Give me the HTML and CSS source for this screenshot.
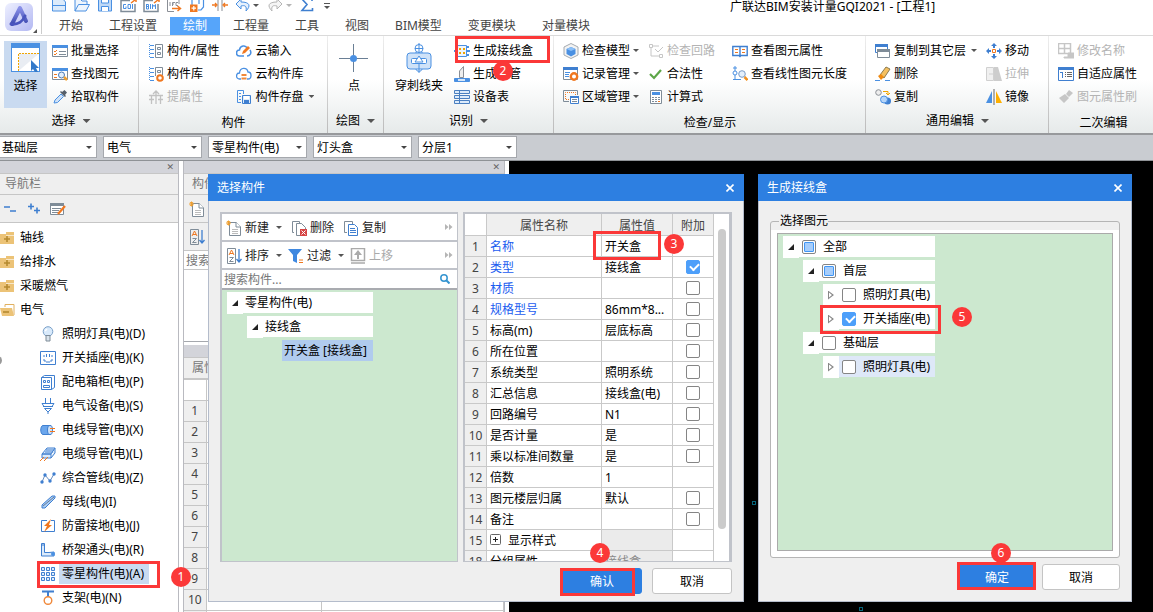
FILE: index.html
```html
<!DOCTYPE html>
<html lang="zh-CN">
<head>
<meta charset="utf-8">
<title>广联达BIM安装计量GQI2021</title>
<link rel="stylesheet" href="styles.css">
</head>
<body>
<div class="app">
  <header class="top">
    <div class="logo">
      <svg width="28" height="28" viewBox="0 0 28 28"><defs><linearGradient id="lg" x1="0" y1="0" x2="1" y2="1"><stop offset="0" stop-color="#eef0ff"/><stop offset="1" stop-color="#b3b8f2"/></linearGradient><linearGradient id="la" x1="0" y1="0" x2="0" y2="1"><stop offset="0" stop-color="#8a90e8"/><stop offset="1" stop-color="#3f4bb0"/></linearGradient></defs><rect width="28" height="28" rx="6" fill="url(#lg)"/><path d="M7 21 15 5l6 13" fill="none" stroke="url(#la)" stroke-width="4" stroke-linejoin="round" stroke-linecap="round"/><path d="M6 21c7 1 12-3 14-8" fill="none" stroke="#4a55be" stroke-width="3" stroke-linecap="round"/></svg>
      <svg class="corner" width="4" height="4" viewBox="0 0 4 4"><path d="M4 0v4H0z" fill="#555"/></svg>
    </div>
    <div class="top-main">
      <div class="title-row">
        <div class="quick">
          <button aria-label="新建工程"><svg width="16" height="13" viewBox="0 0 16 13" fill="#dcebfb" stroke="#4a90e2"><path d="M1.500-2v13h13V2L11-2zM1.500 5.500h13"/></svg></button>
          <button aria-label="打开"><svg width="16" height="13" viewBox="0 0 16 13" fill="#eef5fd" stroke="#4a90e2"><path d="M1 11V-1h5l2 2h5v3M1 11 4.500 4.500H15.500L12 11z"/></svg></button>
          <button aria-label="保存"><svg width="16" height="13" viewBox="0 0 16 13" fill="#bfd9f7" stroke="#4a90e2"><path d="M1.500-2h13v13h-13z"/><path d="M4.500-2h7v5h-7zM4.500 11V6.500h7V11" fill="#fff"/></svg></button>
          <button aria-label="导出GQI"><svg width="17" height="13" viewBox="0 0 17 13" fill="none"><path d="M1 0v11.500h14V4M1 0.500h9" stroke="#7f8c98" stroke-width="1.500"/><path d="M6 4.500H3.500v4H6v-2M8 4.500h2.500v4H8zM12.500 4v5" stroke="#4a90e2"/><path d="M11 3l4-3M12-1h4v3" stroke="#f07820" stroke-width="1.500"/></svg></button>
          <button aria-label="导出BIM"><svg width="17" height="13" viewBox="0 0 17 13" fill="none"><path d="M1 0v11.500h14V4M1 0.500h9" stroke="#7f8c98" stroke-width="1.500"/><path d="M3.500 4v5h2V4.500h-2M3.500 6.500h2M7.500 4v5M9.500 9V4.500l1.500 2 1.500-2V9" stroke="#4a90e2"/><path d="M11 3l4-3M12-1h4v3" stroke="#f07820" stroke-width="1.500"/></svg></button>
          <button aria-label="导入IFC"><svg width="16" height="13" viewBox="0 0 16 13" fill="none"><path d="M13 4V-1H1.500v12.500H8" stroke="#8a8f96"/><path d="M4 2v4M6.500 6V2.500H9M6.500 4H8M12 2.500h-2v3h2" stroke="#8a8f96"/><path d="M6 8.500h8M11.500 6l3 2.500-3 2.500" stroke="#f07820" stroke-width="1.500"/></svg></button>
          <button aria-label="复制图元"><svg width="16" height="13" viewBox="0 0 16 13" fill="none"><path d="M3 5V-1h7v5M7-1h7.500v8L12 10H9" stroke="#4a90e2" stroke-width="1.200"/><path d="M1 4.500h7.500V12H1z" fill="#f07820"/><path d="M4.800 6v4.500M2.500 8.200H7" stroke="#fff" stroke-width="1.200"/></svg></button>
          <button aria-label="拆分"><svg width="16" height="13" viewBox="0 0 16 13" fill="none"><path d="M6-1v12M10-1v12" stroke="#8a8f96"/><path d="M0 5h4M3 3l2 2-2 2M16 5h-4M13 3l-2 2 2 2" stroke="#f07820" stroke-width="1.300"/></svg></button>
          <button aria-label="撤销"><svg width="25" height="13" viewBox="0 0 25 13" fill="#e6f1fd"><path d="M6-1 1 4l5 5V6c4-1 6 0 5 5 5-5 4-9-5-9z" stroke="#4a90e2"/><path d="M18 4h6l-3 3z" fill="#555"/></svg></button>
          <button aria-label="重做"><svg width="26" height="13" viewBox="0 0 26 13" fill="#f5f5f5"><path d="M10-1l5 5-5 5V6C6 5 4 6 5 11 0 6 1 2 10 2z" stroke="#b5b5b5"/><path d="M19 4h6l-3 3z" fill="#b5b5b5"/></svg></button>
          <button aria-label="汇总计算"><svg width="14" height="13" viewBox="0 0 14 13"><path d="M12 1V-1H2l5 5.500L2 10.500h10.500V8" fill="none" stroke="#3f7fd0" stroke-width="1.600"/></svg></button>
          <button aria-label="更多"><svg width="8" height="13" viewBox="0 0 8 13"><path d="M1 3.500h6" stroke="#555"/><path d="M1 6h6L4 9z" fill="#555"/></svg></button>
        </div>
        <div class="app-title">广联达BIM安装计量GQI2021 - [工程1]</div>
      </div>
      <nav class="tabs">
        <button>开始</button><button>工程设置</button><button class="active">绘制</button><button>工程量</button><button>工具</button><button>视图</button><button>BIM模型</button><button>变更模块</button><button>对量模块</button>
      </nav>
    </div>
  </header>

  <div class="ribbon">
    <section class="group g1">
      <div class="tools">
        <button class="big selected"><svg width="30" height="30" viewBox="0 0 30 30"><rect x=".5" y=".5" width="28" height="28" fill="#fff" stroke="#4a90e2"/><path d="M0 0h29v5H0z" fill="#4a90e2"/><path d="M28 10.500H7.500V28" fill="#e9edf3" stroke="#f0a500" stroke-dasharray="2 1"/><path d="m20 17 8 8h-3l2 4h-3l-2-3-2 2z" fill="#3379c9"/></svg>选择</button>
        <div class="col">
          <button><svg class="ic" viewBox="0 0 16 16" fill="none"><path d="M.5 2.500h15v11H.5z" stroke="#7f8c98"/><path d="M0 2h16v3H0z" fill="#4a90e2"/><path d="m2 8 1 1 2-2M2 11l1 1 2-2" stroke="#f07820"/><path d="M7 8.500h7M7 11.500h7" stroke="#7f8c98"/></svg>批量选择</button>
          <button><svg class="ic" viewBox="0 0 16 16" fill="none"><path d="M.5 2.500h15v11H.5z" stroke="#7f8c98"/><path d="M0 2h16v3H0z" fill="#4a90e2"/><path d="M2 8.500h3M2 11.500h3" stroke="#f07820"/><circle cx="9.500" cy="9" r="3" fill="#e3effc" stroke="#4a7ab5"/><path d="m12 11 3 3" stroke="#f0a030" stroke-width="2.500"/></svg>查找图元</button>
          <button><svg class="ic" viewBox="0 0 16 16"><path d="m2 14 1-3 6-6 2.500 2.500-6 6z" fill="#cfe2f8" stroke="#4a90e2"/><path d="m8 3 5 5 1-1-1-1 2-2.500L12.500 1 10 3 9 2z" fill="#555f6b"/></svg>拾取构件</button>
        </div>
      </div>
      <div class="caption">选择<i class="dd"></i></div>
    </section>
    <section class="group g2">
      <div class="tools">
        <div class="col">
          <button><svg class="ic" viewBox="0 0 16 16" fill="none"><path d="M1.500 1v14" stroke="#4a90e2" stroke-dasharray="1 1"/><path d="M2 2.500h4M2 6.500h4M2 10.500h4M2 14.500h4" stroke="#4a90e2"/><path d="M7.500 1.500h7v13h-7z" stroke="#7f8c98"/><path d="M9.500 4.500h3v2h-3zM9.500 9.500h3v2h-3z" stroke="#7f8c98"/></svg>构件/属性</button>
          <button><svg class="ic" viewBox="0 0 16 16" fill="none"><path d="M1.500 1v14" stroke="#4a90e2" stroke-dasharray="1 1"/><path d="M2 2.500h4M2 6.500h4M2 10.500h4M2 14.500h4" stroke="#4a90e2"/><path d="M7.500 10V1.500h7V9M9.500 4.500h3v2h-3z" stroke="#7f8c98"/><circle cx="12" cy="12" r="2.800" stroke="#f07820" stroke-width="2"/></svg>构件库</button>
          <button class="off"><svg class="ic" viewBox="0 0 16 16" fill="none" stroke="#c2c2c2"><path d="M1 6.500h14M3.500 6.500V15M12.500 6.500V15M8 15V2M5 5l3-3 3 3M1 10.500h5M10 10.500h5" stroke-width="1.300"/></svg>提属性</button>
        </div>
        <div class="col spaced">
          <button><svg class="ic" viewBox="0 0 16 16" fill="none"><path d="M8 13H3.500a3 3 0 0 1 0-6C4 2 10 2 11 5M14 7c2 3 0 6-3 6" stroke="#4a90e2" stroke-width="1.500"/><path d="m6 11 1-3 5-5 2 2-5 5z" fill="#f07820"/></svg>云输入</button>
          <button><svg class="ic" viewBox="0 0 16 16" fill="none"><path d="M5 13H3.500a3 3 0 0 1 0-6C4 1 11 1 12 6c4 0 4 7 0 7h-1" stroke="#4a90e2" stroke-width="1.300"/><path d="M5.500 8h5v2h-5zM5.500 11.500h5v2h-5z" fill="#f0883a"/></svg>云构件库</button>
          <button><svg class="ic" viewBox="0 0 16 16" fill="none"><path d="M5 13.500H1.500v-12h6V5M3 4.500h2M3 7.500h2M3 10.500h2" stroke="#4a90e2"/><path d="M6.500 6.500h8v8h-8z" fill="#dcebfb" stroke="#3f7fd0"/><path d="M8 7h5v3H8z" fill="#fff"/><path d="M8 11h5v3H8z" fill="#3f7fd0"/></svg>构件存盘<i class="dd far"></i></button>
        </div>
      </div>
      <div class="caption low">构件</div>
    </section>
    <section class="group g3">
      <div class="tools">
        <button class="big"><svg width="30" height="30" viewBox="0 0 30 30"><path d="M14.500 1v11M14.500 18v11M0 15.500h11M18 15.500h11" stroke="#6a7f95"/><circle cx="14.500" cy="15.500" r="3.500" fill="#4a90e2"/></svg>点</button>
      </div>
      <div class="caption">绘图<i class="dd"></i></div>
    </section>
    <section class="group g4">
      <div class="tools">
        <button class="big"><svg width="30" height="30" viewBox="0 0 30 30" fill="none" stroke="#4a90e2"><circle cx="15" cy="5.500" r="4"/><path d="M15 0v10M11 5.500h8M12 9v3M18 9v3"/><rect x="3" y="10" width="24" height="16" rx="3" fill="#cfe2f8"/><rect x="7.500" y="15.500" width="15" height="5" rx="1" fill="#fff"/><path d="m15 13 4 6h-8zM15 20v10" fill="#fff"/><path d="M12 26c0 3 6 3 6 0"/></svg>穿刺线夹</button>
        <div class="col">
          <button><svg class="ic" viewBox="0 0 16 16"><path d="M0 8h3M13 4h2M13 8h3M13 12h2" stroke="#4a90e2" stroke-width="2"/><path d="M3.500 2.500h9v11h-9z" fill="#eef5fd" stroke="#4a90e2"/><path d="M5 5h2v2H5zM9 5h2v2H9zM5 9h2v2H5zM9 9h2v2H9z" fill="#f0a500"/></svg>生成接线盒</button>
          <button><svg class="ic" viewBox="0 0 16 16"><path d="M5.500 11.500V5l4-4.500v11z" fill="#eee" stroke="#8a8f96"/><path d="M.5 12.500h15v3H.5z" fill="#4a90e2" stroke="#4a90e2"/><path d="M4 13h7v2H4z" fill="#d6e7fa"/></svg>生成套管</button>
          <button><svg class="ic" viewBox="0 0 16 16"><path d="M.5 1.500h15v3H.5zM.5 6.500h15v3H.5zM.5 11.500h15v3H.5zM5.500 1v14" fill="#dcebfb" stroke="#4a7fc0"/></svg>设备表</button>
        </div>
      </div>
      <div class="caption">识别<i class="dd"></i></div>
    </section>
    <section class="group g5">
      <div class="tools">
        <div class="col">
          <button><svg class="ic" viewBox="0 0 16 16"><path d="M8 .5 15 4v8l-7 3.500L1 12V4z" fill="#f3f3f3" stroke="#a5aab0"/><path d="m8 4 4.500 2v5L8 13.500 3.500 11V6z" fill="#4a90e2"/><path d="m8 4 4.500 2L8 8 3.500 6z" fill="#8cc0f8"/></svg>检查模型<i class="dd"></i></button>
          <button><svg class="ic" viewBox="0 0 16 16" fill="none"><path d="M.5 1.500h14v12H.5z" stroke="#7f8c98"/><path d="M0 1h15v3H0z" fill="#3f7fd0"/><path d="M2 6.500h5M2 8.500h4M2 10.500h4" stroke="#4a90e2"/><circle cx="11" cy="10.500" r="3.200" stroke="#f07820" stroke-width="2.400"/></svg>记录管理<i class="dd"></i></button>
          <button><svg class="ic" viewBox="0 0 16 16" fill="none"><path d="M6 12.500H.5v-11h14V6" stroke="#7f8c98"/><path d="M6 10.500H2.500v-7h10V6" stroke="#f07820" stroke-dasharray="1 1"/><path d="M7.500 7.500h8v7h-8z" fill="#fff" stroke="#3f7fd0"/><path d="M7 7h9v2H7z" fill="#3f7fd0"/><path d="M9 10.500h5M9 12.500h5" stroke="#7f8c98"/></svg>区域管理<i class="dd"></i></button>
        </div>
        <div class="col near">
          <button class="off"><svg class="ic" viewBox="0 0 16 16" fill="none" stroke="#c6c6c6"><path d="M1.500 1.500h3v3h-3zM4 3h7M3 4v9h8M11.500 11.500h3v3h-3zM7 6l3 3 5-5"/></svg>检查回路</button>
          <button><svg class="ic" viewBox="0 0 16 16"><path d="m2 8 4 4 7-8" fill="none" stroke="#5da648" stroke-width="2.200"/></svg>合法性</button>
          <button><svg class="ic" viewBox="0 0 16 16"><path d="M2.500 1.500h11v13h-11z" fill="#fff" stroke="#7f8c98"/><path d="M4 3h8v3H4z" fill="#4a90e2"/><path d="M4 8.500h8M4 10.500h8M4 12.500h8" stroke="#7f8c98" stroke-dasharray="2 1"/><path d="M10 12h2v1h-2z" fill="#f07820"/></svg>计算式</button>
        </div>
        <div class="col spaced">
          <button><svg class="ic" viewBox="0 0 16 16" fill="none"><path d="M.8 3.500h14.400v9H9l-1 1-1-1H.8zM8 4v9" stroke="#3f7fd0" stroke-width="1.400"/><path d="M3 6.500h3M3 9.500h3M10 6.500h3M10 9.500h3" stroke="#f07820"/></svg>查看图元属性</button>
          <button><svg class="ic" viewBox="0 0 16 16" fill="none"><path d="M3 0v5M3 9v5M1 13.500h8M1 2h4" stroke="#4a90e2"/><circle cx="3" cy="7" r="2" stroke="#4a90e2"/><circle cx="10" cy="8" r="3.300" fill="#e3effc" stroke="#7a9cc8"/><path d="m12.500 11 3 3" stroke="#f09020" stroke-width="2.500"/></svg>查看线性图元长度</button>
        </div>
      </div>
      <div class="caption low">检查/显示</div>
    </section>
    <section class="group g6">
      <div class="tools">
        <div class="col">
          <button><svg class="ic" viewBox="0 0 16 16" fill="#fff"><path d="M.5 1.500h12v8H.5z" stroke="#3f7fd0"/><path d="M0 1h13v3H0z" fill="#3f7fd0"/><path d="M2.500 6.500h12v8h-12z" stroke="#7f8c98"/><path d="M2 6h13v3H2z" fill="#7f8c98"/></svg>复制到其它层<i class="dd far"></i></button>
          <button><svg class="ic" viewBox="0 0 16 16"><path d="m5 9 6-8 4 2-6 9z" fill="#f5c060" stroke="#8a7a50"/><path d="m3 10 3-2 3 3-3 3z" fill="#f08a10"/><path d="M0 14.500h5M10 14.500h5" stroke="#4a90e2"/></svg>删除</button>
          <button><svg class="ic" viewBox="0 0 16 16" fill="none"><circle cx="3.500" cy="3.500" r="2.800" fill="#eee" stroke="#8a8f96"/><path d="M8 2.500h5V6M11 4l2 2 2-2" stroke="#f0a500"/><circle cx="12.500" cy="12" r="3.500" fill="#3f7fd0"/><circle cx="9" cy="10.500" r="3.500" fill="#b5d5fa" stroke="#4a90e2"/></svg>复制</button>
        </div>
        <div class="col near">
          <button><svg class="ic" viewBox="0 0 16 16"><path d="m8 0 3 3H9v2H7V3H5zM8 16l3-3H9v-2H7v2H5zM0 8l3-3v2h2v2H3v2zM16 8l-3-3v2h-2v2h2v2z" fill="#3f7fd0"/><path d="M6.500 6.500h3v3h-3z" fill="#fff" stroke="#f07820"/></svg>移动</button>
          <button class="off"><svg class="ic" viewBox="0 0 16 16"><path d="M.5 1.500h7v13h-7zM3 8h4" fill="#f0f0f0" stroke="#d0d0d0"/><path d="M8 1h4l4 14H8z" fill="#cdcdcd"/></svg>拉伸</button>
          <button><svg class="ic" viewBox="0 0 16 16"><path d="M6 2v12H0z" fill="#4a90e2"/><path d="M10 2v12h6z" fill="#ffb000"/><path d="M8 0v16" stroke="#666"/></svg>镜像</button>
        </div>
      </div>
      <div class="caption">通用编辑<i class="dd"></i></div>
    </section>
    <section class="group g7">
      <div class="tools">
        <div class="col">
          <button class="off"><svg class="ic" viewBox="0 0 16 16" fill="none" stroke="#c6c6c6"><path d="M.5.500h12v10H.5zM6.500.500v10M.5 5.500h12" stroke-width="1.500"/><path d="M6 14h4v-4h6v5H6z" fill="#c6c6c6"/></svg>修改名称</button>
          <button><svg class="ic" viewBox="0 0 16 16" fill="none"><path d="M.5 1.500h15v13H.5z" fill="#fff" stroke="#3f7fd0"/><path d="M0 1h16v3H0z" fill="#3f7fd0"/><path d="M2 6.500h3M4.500 6v6" stroke="#3f7fd0"/><path d="M7 6.500h1M9 6.500h5M7 8.500h1M9 8.500h5M7 10.500h1M9 10.500h5" stroke="#666"/></svg>自适应属性</button>
          <button class="off"><svg class="ic" viewBox="0 0 16 16"><path d="m11 1 4 3-4 4-3-3zM7 5l4 4-5 5-5-5z" fill="#c6c6c6"/></svg>图元属性刷</button>
        </div>
      </div>
      <div class="caption low">二次编辑</div>
    </section>
  </div>

  <div class="filters">
    <label class="combo"><select aria-label="楼层"><option>基础层</option></select></label>
    <label class="combo"><select aria-label="专业"><option>电气</option></select></label>
    <label class="combo"><select aria-label="构件类型"><option>零星构件(电)</option></select></label>
    <label class="combo"><select aria-label="构件"><option>灯头盒</option></select></label>
    <label class="combo"><select aria-label="分层"><option>分层1</option></select></label>
  </div>

  <main class="work">
    <aside class="nav">
      <div class="strip"><button aria-label="关闭导航栏">✕</button></div>
      <h2 class="panel-title">导航栏</h2>
      <div class="nav-tools">
        <button aria-label="全部折叠"><svg class="ic" viewBox="0 0 16 16"><path d="M0 6h6M6 10h6" stroke="#3f7fd0" stroke-width="1.600"/></svg></button>
        <button aria-label="全部展开"><svg class="ic" viewBox="0 0 16 16"><path d="M0 5.500h6M3 2.500v6M6 9.500h6M9 6.500v6" stroke="#3f7fd0" stroke-width="1.600"/></svg></button>
        <button aria-label="编辑"><svg class="ic" viewBox="0 0 16 16" fill="none"><path d="M.5 2.500h13v11H.5z" fill="#fff" stroke="#7f8c98"/><path d="M0 2h14v3H0z" fill="#7f8c98"/><path d="M2 7.500h9M2 9.500h7M2 11.500h6" stroke="#7f8c98"/><path d="m8 13 7-8" stroke="#f07820" stroke-width="2.200"/></svg></button>
      </div>
      <ul class="nav-tree">
        <li class="folder"><svg class="ic" viewBox="0 0 16 16"><path d="M0 4h6V2h8v12H0z" fill="#ecc377"/><path d="M6 5.500h8" stroke="#fff" stroke-opacity=".6"/><path d="M4 9h6M7 6v6" stroke="#b58a30" stroke-width="1.600"/></svg>轴线</li>
        <li class="folder"><svg class="ic" viewBox="0 0 16 16"><path d="M0 4h6V2h8v12H0z" fill="#ecc377"/><path d="M6 5.500h8" stroke="#fff" stroke-opacity=".6"/><path d="M4 9h6M7 6v6" stroke="#b58a30" stroke-width="1.600"/></svg>给排水</li>
        <li class="folder"><svg class="ic" viewBox="0 0 16 16"><path d="M0 4h6V2h8v12H0z" fill="#ecc377"/><path d="M6 5.500h8" stroke="#fff" stroke-opacity=".6"/><path d="M4 9h6M7 6v6" stroke="#b58a30" stroke-width="1.600"/></svg>采暖燃气</li>
        <li class="folder"><svg class="ic" viewBox="0 0 16 16"><path d="M5 5V2.500h9V13" fill="#fff" stroke="#e0b060"/><path d="M0 6h12l2 8H2z" fill="#ecc377"/><path d="M3 10h6" stroke="#b58a30" stroke-width="1.600"/></svg>电气</li>
        <li><svg class="ic" viewBox="0 0 16 16"><circle cx="8" cy="5.500" r="4.800" fill="#d9eafb" stroke="#7aa0c8"/><path d="M6 9.500h4V15H6z" fill="#d9e3ec" stroke="#7f8c98"/><path d="M5 5l2-2" stroke="#fff" stroke-width="1.500"/></svg><span>照明灯具(电)(D)</span></li>
        <li><svg class="ic" viewBox="0 0 16 16" fill="none" stroke="#3f7fd0"><path d="M.5 1.500h15v13H.5z"/><path d="M3 6h2M6.500 4v3M9.500 4v3M11 6h2M4 9v2h2M12 9v2h-2M6 12h4"/></svg><span>开关插座(电)(K)</span></li>
        <li><svg class="ic" viewBox="0 0 16 16" fill="#fff" stroke="#3f7fd0"><path d="M1.500 3.500h10v12h-10zM1.500 3.500l3-2h10v12l-3 2M3.500 6.500h2v2h-2zM7.500 6.500h2v2h-2zM3.500 11.500h6v2h-6z"/></svg><span>配电箱柜(电)(P)</span></li>
        <li><svg class="ic" viewBox="0 0 16 16" fill="#fff" stroke="#3f7fd0"><path d="M5.500 0v5M10.500 0v5M2 5.500h12l-2 3H4zM3 8.500h10M4.500 10.500h7L8 14zM8 14v2"/></svg><span>电气设备(电)(S)</span></li>
        <li><svg class="ic" viewBox="0 0 16 16"><path d="M3 3.500h8v9H3c-3 0-3-9 0-9z" fill="#6ba6ec" stroke="#3f7fd0"/><ellipse cx="10" cy="8" rx="2.500" ry="4.500" fill="#cfe2f8" stroke="#3f7fd0"/><path d="M10 6.500h5M10 9.500h5" stroke="#f07820"/></svg><span>电线导管(电)(X)</span></li>
        <li><svg class="ic" viewBox="0 0 16 16" fill="#dcebfb" stroke="#3f7fd0"><path d="m2 8 5-6h8l-4 6zM2 8h9v4H2zM11 12l4-5V2M5 6h8M6 4h8"/><path d="m0 15 4-4M4 15l4-4" stroke="#f07820"/></svg><span>电缆导管(电)(L)</span></li>
        <li><svg class="ic" viewBox="0 0 16 16" fill="#3f7fd0"><path d="m2 12 3-7 5 6 4-7" fill="none" stroke="#6a8fc0"/><circle cx="2" cy="12" r="1.700"/><circle cx="5" cy="5" r="1.700"/><circle cx="10" cy="11" r="1.700"/><circle cx="14" cy="4" r="1.700"/></svg><span>综合管线(电)(Z)</span></li>
        <li><svg class="ic" viewBox="0 0 16 16"><path d="M2 14v-3L12 2h3v2L5 14z" fill="#a9cdf6" stroke="#3f7fd0"/><path d="m3 12 11-9" stroke="#667c99"/></svg><span>母线(电)(I)</span></li>
        <li><svg class="ic" viewBox="0 0 16 16"><path d="M7 2.500H1.500v11h13v-11H11" fill="none" stroke="#3f7fd0"/><path d="m11 1-7 7h3l-3 6 8-7H9z" fill="#f07820"/></svg><span>防雷接地(电)(J)</span></li>
        <li><svg class="ic" viewBox="0 0 16 16"><path d="M1.500 1.500h3v9H9l5-.5v4H1.500z" fill="#dcebfb" stroke="#3f7fd0"/><circle cx="13" cy="12" r="2" fill="#4a90e2"/><path d="M1 3h4" stroke="#3f7fd0"/></svg><span>桥架通头(电)(R)</span></li>
        <li><svg class="ic" viewBox="0 0 16 16" fill="#dcebfb" stroke="#3f7fd0"><path d="M1.500 1.500h3v3h-3zM6.500 1.500h3v3h-3zM11.500 1.500h3v3h-3zM1.500 6.500h3v3h-3zM6.500 6.500h3v3h-3zM11.500 6.500h3v3h-3zM1.500 11.500h3v3h-3zM6.500 11.500h3v3h-3zM11.500 11.500h3v3h-3z"/></svg><span class="chosen">零星构件(电)(A)</span></li>
        <li><svg class="ic" viewBox="0 0 16 16" fill="none"><path d="M2 1.500h12M8 2v5" stroke="#3f7fd0" stroke-width="2"/><circle cx="8" cy="10.500" r="3.800" stroke="#f0883a" stroke-width="1.400"/></svg><span>支架(电)(N)</span></li>
      </ul>
      <i class="knob"></i>
    </aside>

    <aside class="dock">
      <div class="strip"><button aria-label="关闭构件列表">✕</button></div>
      <h2 class="panel-title">构件列表</h2>
      <div class="dock-tools"><svg class="ic" viewBox="0 0 16 16" fill="#fff"><path d="M3.500 2.500h7l4 4v9h-11z" stroke="#7f8c98"/><path d="M10 2v5h5" stroke="#7f8c98"/><path d="M6 9.500h6M6 11.500h6M6 13.500h6" stroke="#bbb"/><path d="M0 3h5M2.500.500v5M1 1l3 4M4 1 1 5" stroke="#f0a030"/></svg></div>
      <div class="dock-tools"><svg class="ic" viewBox="0 0 16 16" fill="none"><path d="M1.500.500h8v15h-8z" stroke="#7f8c98"/><path d="m3 7 2.500-5L8 7M4 5.500h3" stroke="#f07820"/><path d="M3.500 9.500h4l-4 4h4" stroke="#7f8c98"/><path d="M13 1v13M10.500 11l2.500 3 2.500-3" stroke="#3f7fd0" stroke-width="1.300"/></svg></div>
      <input class="dock-search" aria-label="搜索构件" placeholder="搜索构件...">
      <div class="dock-list"></div>
      <div class="strip second"></div>
      <h2 class="panel-title">属性列表</h2>
      <table class="dock-table">
        <tr class="head"><th></th><td></td><td></td></tr>
        <tr><th>1</th><td></td><td></td></tr><tr><th>2</th><td></td><td></td></tr><tr><th>3</th><td></td><td></td></tr><tr><th>4</th><td></td><td></td></tr><tr><th>5</th><td></td><td></td></tr><tr><th>6</th><td></td><td></td></tr><tr><th>7</th><td></td><td></td></tr><tr><th>8</th><td></td><td></td></tr><tr><th>9</th><td></td><td></td></tr><tr><th>10</th><td></td><td></td></tr><tr><th></th><td></td><td></td></tr>
      </table>
    </aside>
    <div class="canvas"></div>
  </main>

  <i class="node node-a"></i>
  <i class="node node-b"></i>

  <section class="dialog pick" role="dialog" aria-label="选择构件">
    <header><span>选择构件</span><button aria-label="关闭"><svg width="8" height="8" viewBox="0 0 8 8"><path d="m.5.500 7 7m0-7-7 7" stroke="#fff" stroke-width="1.600"/></svg></button></header>
    <div class="pick-body">
      <div class="list-pane">
        <div class="bar">
          <button><svg class="ic" viewBox="0 0 16 16" fill="#fff"><path d="M3.500 2.500h7l4 4v9h-11z" stroke="#7f8c98"/><path d="M10 2v5h5" stroke="#7f8c98"/><path d="M6 9.500h6M6 11.500h6M6 13.500h6" stroke="#bbb"/><path d="M0 3h5M2.500.500v5M1 1l3 4M4 1 1 5" stroke="#f0a030"/></svg>新建<i class="dd far"></i></button>
          <button><svg class="ic" viewBox="0 0 16 16" fill="#fff"><path d="M3 12.500H1.500V1.500h7V4M10 4h1" stroke="#7f8c98"/><path d="M5.500 3.500h5l4 4v8h-9z" stroke="#7f8c98"/><path d="M9 9h7v7H9z" fill="#d64545"/><path d="m10.500 10.500 4 4m0-4-4 4" stroke="#fff"/></svg>删除</button>
          <button><svg class="ic" viewBox="0 0 16 16" fill="#fff"><path d="M4 12.500H1.500V1.500h8V4" stroke="#7f8c98"/><path d="M5.500 4.500h6l3 3v8h-9z" stroke="#3f7fd0"/><path d="M7 8.500h5M7 10.500h6M7 12.500h6" stroke="#3f7fd0"/></svg>复制</button>
          <svg class="more" width="8" height="6" viewBox="0 0 8 6"><path d="M0 0v6l3.500-3zM4 0v6l3.500-3z" fill="#b5b5b5"/></svg>
        </div>
        <div class="bar tight">
          <button><svg class="ic" viewBox="0 0 16 16" fill="none"><path d="M1.500.500h8v15h-8z" stroke="#7f8c98"/><path d="m3 7 2.500-5L8 7M4 5.500h3" stroke="#f07820"/><path d="M3.500 9.500h4l-4 4h4" stroke="#7f8c98"/><path d="M13 1v13M10.500 11l2.500 3 2.500-3" stroke="#3f7fd0" stroke-width="1.300"/></svg>排序<i class="dd far"></i></button>
          <button><svg class="ic" viewBox="0 0 16 16"><path d="M0 1h14L9 7v8l-4-2V7z" fill="#3f88e0"/><path d="M11 12h4M11 14.500h4" stroke="#f07820"/></svg>过滤<i class="dd far"></i></button>
          <button class="off"><svg class="ic" viewBox="0 0 16 16"><path d="M1.500.500h13v12h-13zM1 15h14" fill="#fff" stroke="#aaa" stroke-width="1.500"/><path d="m8 2 4 5H9v4H7V7H4z" fill="#aaa"/></svg>上移</button>
          <svg class="more" width="8" height="6" viewBox="0 0 8 6"><path d="M0 0v6l3.500-3zM4 0v6l3.500-3z" fill="#b5b5b5"/></svg>
        </div>
        <div class="search"><input aria-label="搜索构件名称" placeholder="搜索构件..."><svg width="10" height="10" viewBox="0 0 10 10"><circle cx="4" cy="4" r="3.200" fill="none" stroke="#3594d0" stroke-width="1.500"/><path d="m6.500 6.500 3 3" stroke="#3594d0" stroke-width="2"/></svg></div>
        <ul class="tree small">
          <li><i class="tw open"></i><span>零星构件(电)</span></li>
          <li class="l2"><i class="tw open"></i><span>接线盒</span></li>
          <li class="leaf"><span class="hit">开关盒 [接线盒]</span></li>
        </ul>
      </div>
      <div class="prop-pane">
        <table class="props">
          <thead><tr><th></th><th>属性名称</th><th>属性值</th><th>附加</th></tr></thead>
          <tbody>
          <tr><th>1</th><td class="key">名称</td><td>开关盒</td><td></td></tr>
          <tr><th>2</th><td class="key">类型</td><td>接线盒</td><td><input type="checkbox" aria-label="类型附加" checked></td></tr>
          <tr><th>3</th><td class="key">材质</td><td></td><td><input type="checkbox" aria-label="材质附加"></td></tr>
          <tr><th>4</th><td class="key">规格型号</td><td>86mm*8...</td><td><input type="checkbox" aria-label="规格型号附加"></td></tr>
          <tr><th>5</th><td>标高(m)</td><td>层底标高</td><td><input type="checkbox" aria-label="标高附加"></td></tr>
          <tr><th>6</th><td>所在位置</td><td></td><td><input type="checkbox" aria-label="所在位置附加"></td></tr>
          <tr><th>7</th><td>系统类型</td><td>照明系统</td><td><input type="checkbox" aria-label="系统类型附加"></td></tr>
          <tr><th>8</th><td>汇总信息</td><td>接线盒(电)</td><td><input type="checkbox" aria-label="汇总信息附加"></td></tr>
          <tr><th>9</th><td>回路编号</td><td>N1</td><td><input type="checkbox" aria-label="回路编号附加"></td></tr>
          <tr><th>10</th><td>是否计量</td><td>是</td><td><input type="checkbox" aria-label="是否计量附加"></td></tr>
          <tr><th>11</th><td>乘以标准间数量</td><td>是</td><td><input type="checkbox" aria-label="乘以标准间数量附加"></td></tr>
          <tr><th>12</th><td>倍数</td><td>1</td><td></td></tr>
          <tr><th>13</th><td>图元楼层归属</td><td>默认</td><td><input type="checkbox" aria-label="图元楼层归属附加"></td></tr>
          <tr><th>14</th><td>备注</td><td></td><td><input type="checkbox" aria-label="备注附加"></td></tr>
          <tr><th>15</th><td><svg class="plus" width="11" height="11" viewBox="0 0 11 11"><rect x=".5" y=".5" width="10" height="10" rx="1" fill="#fff" stroke="#666"/><path d="M3 5.500h5M5.500 3v5" stroke="#222"/></svg>显示样式</td><td class="locked"></td><td></td></tr>
          <tr><th>18</th><td>分组属性</td><td class="locked">接线盒</td><td></td></tr>
          </tbody>
        </table>
        <div class="scroll"><i></i></div>
      </div>
    </div>
    <footer><button class="primary">确认</button><button>取消</button></footer>
  </section>

  <section class="dialog make" role="dialog" aria-label="生成接线盒">
    <header><span>生成接线盒</span><button aria-label="关闭"><svg width="8" height="8" viewBox="0 0 8 8"><path d="m.5.500 7 7m0-7-7 7" stroke="#fff" stroke-width="1.600"/></svg></button></header>
    <div class="make-body">
      <fieldset>
        <legend>选择图元</legend>
        <ul class="tree">
          <li><i class="tw open"></i><label><input type="checkbox" class="part">全部</label></li>
          <li class="l2"><i class="tw open"></i><label><input type="checkbox" class="part">首层</label></li>
          <li class="l3"><i class="tw"></i><label><input type="checkbox">照明灯具(电)</label></li>
          <li class="l3"><i class="tw"></i><label><input type="checkbox" checked>开关插座(电)</label></li>
          <li class="l2"><i class="tw open"></i><label><input type="checkbox">基础层</label></li>
          <li class="l3"><i class="tw"></i><label class="hover"><input type="checkbox">照明灯具(电)</label></li>
        </ul>
      </fieldset>
    </div>
    <footer><button class="primary">确定</button><button>取消</button></footer>
  </section>

  <i class="mark m1"></i><b class="step s1">1</b>
  <i class="mark m2"></i><b class="step s2">2</b>
  <i class="mark m3"></i><b class="step s3">3</b>
  <i class="mark m4"></i><b class="step s4">4</b>
  <i class="mark m5"></i><b class="step s5">5</b>
  <i class="mark m6"></i><b class="step s6">6</b>
</div>
</body>
</html>
```

FILE: styles.css
```css
* { box-sizing: border-box; }
body {
  margin: 0;
  font: 12px/16px "Noto Sans", "Noto Sans CJK SC", sans-serif;
  color: #000;
  background: #fff;
}
button, input, select { font: inherit; color: inherit; }
button { border: 0; padding: 0; background: none; white-space: nowrap; }
ul { list-style: none; margin: 0; padding: 0; }
h2 { margin: 0; font: inherit; }
svg { display: block; flex: none; }
.app {
  position: relative;
  display: flex;
  flex-direction: column;
  height: 100vh;
  overflow: hidden;
}
.ic { width: 16px; height: 16px; }

/* title area */
.top { display: flex; height: 36px; flex: none; border-bottom: 1px solid #dadada; }
.logo { display: flex; align-items: flex-end; width: 42px; padding: 0 0 1px 5px; border-right: 1px solid #ccc; margin-bottom: 1px; background: #fff; }
.logo svg:first-child { align-self: center; }
.top-main { flex: 1; padding-left: 4px; }
.title-row { display: flex; height: 17px; }
.quick { display: flex; gap: 7px; flex: 0 0 684px; padding-left: 5px; height: 13px; overflow: hidden; }
.quick button { min-width: 16px; height: 13px; }
.quick button:nth-child(4), .quick button:nth-child(5) { flex: 0 0 16px; }
.app-title { height: 14px; line-height: 14px; white-space: nowrap; }
.tabs { display: flex; }
.tabs button { height: 18px; line-height: 18px; padding: 0 13px; color: #444; }
.tabs .active { background: #56a5fa; color: #fff; }

/* ribbon */
.ribbon {
  display: flex;
  flex: none;
  height: 99px;
  background: linear-gradient(#fff 45%, #e6eaea);
  border-bottom: 2px solid #97999c;
}
.group { position: relative; flex: none; display: flex; flex-direction: column; padding: 3px 0 0 9px; }
.group:not(:last-child) { border-right: 1px solid; border-image: linear-gradient(#eee, #bbb) 1; }
.g1 { width: 139px; padding-left: 4px; }
.g2 { width: 189px; }
.g3 { width: 56px; padding-left: 0; }
.g4 { width: 170px; padding-left: 0; }
.g5 { width: 312px; }
.g6 { width: 183px; }
.g7 { flex: 1; }
.tools { display: flex; height: 69px; }
.col { display: flex; flex-direction: column; align-items: flex-start; }
.col button { display: flex; align-items: center; gap: 3px; height: 23px; }
.col.spaced { margin-left: 17px; }
.col.near { margin-left: 9px; }
.big { display: flex; flex-direction: column; align-items: center; gap: 5px; width: 43px; padding-top: 4px; }
.big.selected { background: #c9daf0; margin: 2px 5px 0 0; padding-top: 2px; }
.g3 .big { width: 52px; }
.g4 .big { width: 70px; }
.caption { display: flex; justify-content: center; align-items: center; gap: 7px; height: 24px; padding-top: 2px; }
.g2 .caption, .g5 .caption, .g6 .caption { padding-right: 8px; }
.g7 .caption { padding-right: 4px; }
.caption.low { padding-top: 6px; }
.off { color: #b4b4b4; }
.dd { flex: none; width: 6px; height: 3px; background: #555; clip-path: polygon(0 0, 100% 0, 50% 100%); }
.dd.far { margin-left: 3px; }
.col .dd { margin-left: 0; }
.g2 .col .dd, .g6 .col .dd { margin-left: 2px; }
.caption .dd { width: 8px; height: 4px; }

/* filter row */
.filters { display: flex; flex: none; gap: 6px; height: 26px; padding: 1px 0 2px; margin-left: -2px; background: #c9ccd1; border-bottom: 1px solid #8f9296; }
.combo { position: relative; flex: 0 0 99px; }
.combo select { appearance: none; display: block; width: 100%; height: 22px; padding: 2px 3px 0; border: 1px solid #a5a8ad; border-radius: 0; background: #fff; }
.combo::after { content: ""; position: absolute; right: 5px; top: 10px; width: 6px; height: 3px; background: #444; clip-path: polygon(0 0, 100% 0, 50% 100%); }

/* docked panels */
.work { display: flex; flex: 1; min-height: 0; background: #fff; }
.nav { position: relative; flex: 0 0 179px; border-right: 1px solid #b9bac0; overflow: hidden; }
.strip { display: flex; justify-content: flex-end; height: 12px; padding-right: 4px; background: #d3d4da; }
.strip button { font-size: 9px; line-height: 12px; color: #666; font-family: "DejaVu Sans", sans-serif; }
.panel-title { height: 22px; line-height: 20px; padding-left: 5px; color: #777; background: #efefef; border-bottom: 1px solid #c6c6c6; border-top: 1px solid #c6c6c6; }
.nav-tools { display: flex; align-items: center; gap: 8px; height: 28px; padding-left: 4px; background: #efefef; border-bottom: 1px solid #c6c6c6; }
.nav-tools button:last-child { margin-left: -2px; }
.nav-tree { padding-top: 3px; }
.nav-tree li { display: flex; align-items: center; height: 24px; gap: 3px; padding-left: 40px; white-space: nowrap; }
.nav-tree li.folder { padding-left: 0; gap: 4px; }
.nav-tree span { height: 20px; line-height: 20px; padding: 0 5px 0 3px; }
.nav-tree .chosen { background: #c9daf0; }
.knob { position: absolute; left: -7px; top: 195px; width: 9px; height: 9px; border-radius: 5px; background: #999; }
.dock { flex: 0 0 322px; margin-left: 4px; border: 1px solid #b9bac0; border-width: 0 1px; margin-right: 4px; overflow: hidden; }
.dock .panel-title { padding-left: 8px; }
.dock-tools { display: flex; align-items: center; height: 28px; padding-left: 5px; background: #efefef; border-bottom: 1px solid #c6c6c6; }
.dock-search { display: block; width: 100%; height: 19px; padding: 0 2px; border: 0; border-bottom: 1px solid #c6c6c6; }
.dock-list { height: 72px; border-bottom: 1px solid #a5a8ad; }
.strip.second { margin-top: 3px; }
.dock-table { width: 100%; border-collapse: collapse; table-layout: fixed; }
.dock-table th, .dock-table td { height: 21px; padding: 0; border: 1px solid #c6c6c6; font-weight: normal; color: #444; }
.dock-table th { width: 22px; background: #efefef; border-left: 0; }
.dock-table .head th { background: #fff; }
.dock-table td:nth-child(2) { width: 115px; }
.canvas { flex: 1; background: #000; }
.node { position: absolute; width: 4px; height: 4px; border: 1px solid #05647a; }
.node-a { left: 752px; top: 501px; }
.node-b { left: 859px; top: 607px; }
::placeholder { color: #777; opacity: 1; }

/* dialogs */
.dialog { position: absolute; top: 174px; display: flex; flex-direction: column; height: 428px; background: #efefef; border: 1px solid #b4bccb; border-top: 0; }
.dialog > header { display: flex; justify-content: space-between; align-items: center; flex: none; height: 27px; margin: 0 -1px; padding: 0 10px 0 9px; background: #2d7fe1; color: #fff; }
.dialog footer { display: flex; justify-content: flex-end; gap: 10px; }
.dialog footer button { width: 80px; height: 26px; padding-top: 2px; border: 1px solid #c4c4c4; border-radius: 3px; background: #fff; }
.dialog footer .primary { background: #2d7fe1; border-color: #2d7fe1; color: #fff; }
.pick { left: 208px; width: 536px; }
.make { left: 758px; width: 374px; }
.pick-body { display: flex; gap: 5px; flex: 1; min-height: 0; padding: 11px 11px 0; }
.pick footer { padding: 6px 11px 7px 0; }
.list-pane { display: flex; flex-direction: column; flex: 0 0 238px; border: 2px solid #c0c3ca; border-width: 2px 1px 1px 2px; }
.bar { display: flex; align-items: center; gap: 9px; flex: none; height: 28px; padding: 0 4px; background: #fff; border-bottom: 2px solid #c0c3ca; }
.bar.tight { gap: 6px; }
.bar button { display: flex; align-items: center; gap: 3px; padding-top: 1px; color: #222; }
.bar button.off { color: #aaa; }
.bar .dd { margin-left: 4px; }
.more { margin-left: auto; }
.search { display: flex; align-items: center; flex: none; height: 20px; padding-right: 7px; background: #fff; border-bottom: 2px solid #a9abb0; }
.search input { flex: 1; min-width: 0; height: 18px; padding: 1px 2px 0; border: 0; background: none; }

.tree { flex: 1; padding: 2px 0 0 5px; background: #cce8cf; }
.tree li { display: flex; width: 152px; height: 24px; }
.tree.small li { width: 146px; }
.tree li.l2 { padding-left: 20px; }
.tree li.l3 { padding-left: 40px; }
.tree li.leaf { padding-left: 55px; }
.tw { display: flex; align-items: center; justify-content: center; flex: 0 0 16px; height: 22px; background: #fff; }
.tw::after { content: ""; width: 6px; height: 9px; background: #888; clip-path: polygon(0 0, 100% 50%, 0 100%, 0 0, 1px 2px, 1px 7px, 4px 50%, 1px 2px); }
.tw.open::after { width: 6px; height: 6px; background: #222; clip-path: polygon(100% 0, 100% 100%, 0 100%); }
.tree span, .tree label { display: flex; align-items: center; flex: 1; height: 21px; padding: 1px 0 0 2px; background: #fff; white-space: nowrap; }
.tree label { gap: 7px; padding-left: 3px; }
.tree .hit { background: #b0cbee; }
.tree .hover { background: #dee8f8; }

input[type="checkbox"] { appearance: none; position: relative; flex: none; width: 14px; height: 14px; margin: 0; border: 1px solid #858585; border-radius: 2px; background: #fff; }
input[type="checkbox"]:checked { background: #4d9ffa; border-color: #4d9ffa; }
input[type="checkbox"]:checked::after { content: ""; position: absolute; left: 3px; top: 2px; width: 7px; height: 4px; border: solid #fff; border-width: 0 0 2px 2px; transform: rotate(-45deg); }
input.part::after { content: ""; position: absolute; inset: 1px; border: 1px solid #4096f5; border-radius: 1px; background: #a6cdfb; }

.prop-pane { display: flex; flex: 1; min-width: 0; overflow: hidden; border: 2px solid #c0c3ca; border-width: 2px 3px 1px 2px; background: #fff; }
.props { flex: 1; align-self: flex-start; border-collapse: separate; border-spacing: 0; table-layout: fixed; width: 249px; }
.props th, .props td { height: 21px; padding: 2px 0 0 3px; border: solid #c9c9c9; border-width: 0 1px 1px 0; line-height: 16px; font-weight: normal; text-align: left; white-space: nowrap; }
.props thead th { height: 22px; text-align: center; padding: 2px 0 0; background: #efefef; color: #444; }
.props thead th:first-child { width: 22px; background: #fff; }
.props thead th:nth-child(2) { width: 115px; }
.props thead th:nth-child(3) { width: 71px; }
.props tbody th { text-align: center; padding: 2px 0 0; background: #efefef; color: #444; }
.props td:last-child { padding: 0; }
.props td input { display: block; margin: 0 auto; }
.props .key { color: #1a5cf0; }
.props .locked { background: #ebebeb; color: #8a8a8a; }
.plus { display: inline-block; margin-right: 7px; }
.scroll { flex: 0 0 15px; padding: 15px 3px 32px 4px; background: #fff; }
.scroll i { display: block; height: 100%; border-radius: 4px; background: #cbcbcb; }

.make-body { display: flex; flex: 1; min-height: 0; padding: 12px 11px 0; }
.make fieldset { display: flex; flex: 1; min-width: 0; margin: 0; padding: 4px 6px 6px; border: 1px solid #b5b5b5; border-radius: 3px; background: linear-gradient(#efefef 8px, #fff 8px); }
.make legend { margin-left: 2px; padding: 0 0 0 1px; }
.make .tree { border: 1px solid #aaa; }
.make footer { gap: 6px; padding: 6px 11px 11px; }
.make footer button { width: 78px; }

/* walkthrough callouts */
.mark { position: absolute; border: 3px solid #fb3838; }
.step { position: absolute; width: 20px; height: 20px; border-radius: 10px; background: #fb3838; color: #fff; font-weight: normal; line-height: 20px; text-align: center; }
.m1 { left: 37px; top: 561px; width: 123px; height: 27px; }
.m2 { left: 455px; top: 36px; width: 95px; height: 27px; }
.m3 { left: 593px; top: 231px; width: 68px; height: 29px; }
.m4 { left: 560px; top: 568px; width: 75px; height: 28px; }
.m5 { left: 820px; top: 305px; width: 121px; height: 29px; }
.m6 { left: 957px; top: 562px; width: 79px; height: 28px; }
.s1 { left: 171px; top: 567px; }
.s2 { left: 493px; top: 61px; }
.s3 { left: 664px; top: 234px; }
.s4 { left: 590px; top: 543px; }
.s5 { left: 952px; top: 307px; }
.s6 { left: 991px; top: 543px; }
```
